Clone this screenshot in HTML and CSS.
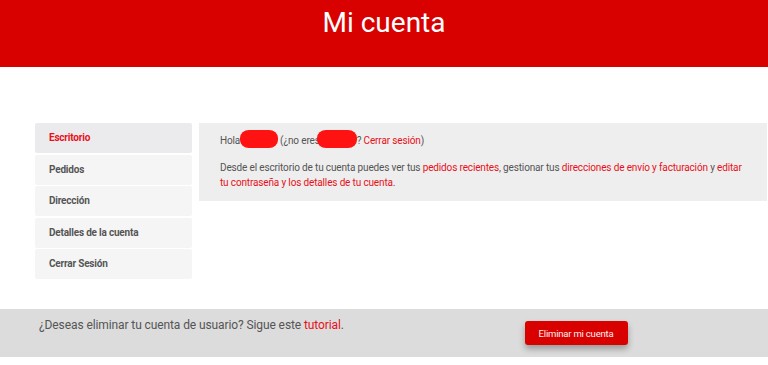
FILE: index.html
```html
<!DOCTYPE html>
<html lang="es">
<head>
<meta charset="utf-8">
<title>Mi cuenta</title>
<link rel="stylesheet" href="styles.css">
</head>
<body>
<header class="hero"><h1 class="hero-title">Mi cuenta</h1></header>
<main class="account">
  <nav class="account-nav">
    <a class="nav-item is-active" href="#">Escritorio</a>
    <a class="nav-item" href="#">Pedidos</a>
    <a class="nav-item" href="#">Dirección</a>
    <a class="nav-item" href="#">Detalles de la cuenta</a>
    <a class="nav-item" href="#">Cerrar Sesión</a>
  </nav>
  <section class="account-content">
    <p class="greet">Hola<span class="blob blob-a"></span>(¿no eres<span class="blob blob-b"></span>? <a class="link" href="#">Cerrar sesión</a>)</p>
    <p class="intro">Desde el escritorio de tu cuenta puedes ver tus <a class="link" href="#">pedidos recientes</a>, gestionar tus <a class="link" href="#">direcciones de envío y facturación</a> y <a class="link" href="#">editar tu contraseña y los detalles de tu cuenta</a>.</p>
  </section>
</main>
<footer class="delete-band">
  <div class="delete-text">¿Deseas eliminar tu cuenta de usuario? Sigue este <a class="link" href="#">tutorial</a>.</div>
  <div class="delete-action"><button class="btn-delete" type="button">Eliminar mi cuenta</button></div>
</footer>
</body>
</html>
```
FILE: styles.css
```css
* { box-sizing: border-box; }
body {
  margin: 0;
  font-family: Roboto, "Liberation Sans", sans-serif;
  color: #555;
  background: #fff;
}
.hero {
  height: 67px;
  background: #d90000;
  display: flex;
  justify-content: center;
  padding-top: 6px;
}
.hero-title {
  margin: 0;
  font-weight: 400;
  font-size: 28px;
  line-height: 34px;
  color: #fff;
}
.account {
  display: flex;
  gap: 7px;
  padding: 56px 1px 0 35px;
  align-items: flex-start;
}
.account-nav {
  flex: 0 0 157px;
  display: flex;
  flex-direction: column;
  gap: 1.5px;
}
.nav-item {
  display: block;
  height: 30px;
  line-height: 30px;
  padding-left: 14px;
  background: #f5f5f5;
  border-radius: 2px;
  font-size: 10px;
  letter-spacing: -0.2px;
  font-weight: 700;
  color: #555;
  text-decoration: none;
}
.nav-item.is-active {
  background: #ebebed;
  color: #e8101a;
}
.account-content {
  flex: 1;
  background: #eeeeee;
  padding: 11px 24px 11px 21px;
  min-height: 77px;
  font-size: 10px;
  letter-spacing: -0.15px;
  line-height: 14.5px;
}
.greet {
  margin: 0 0 13px;
  line-height: 14px;
}
.intro { margin: 0; }
.link { color: #e8101a; text-decoration: none; }
.blob {
  display: inline-block;
  vertical-align: middle;
  height: 18px;
  background: #ff1212;
  border-radius: 9px / 8px;
  margin-top: -4px;
}
.blob-a { width: 38px; margin-right: 2px; }
.blob-b { width: 40px; margin-left: -3px; }
.delete-band {
  margin-top: 30px;
  height: 48px;
  background: #dcdcdc;
  display: grid;
  grid-template-columns: 1fr 1fr;
}
.delete-text {
  padding: 8px 0 0 39px;
  font-size: 12px;
  letter-spacing: -0.1px;
  line-height: 16px;
  color: #555;
}
.delete-action {
  display: flex;
  justify-content: center;
  padding-top: 12px;
}
.btn-delete {
  width: 103px;
  height: 24px;
  border: 0;
  border-radius: 3px;
  background: #d90000;
  color: #fff0f0;
  font-family: Roboto, "Liberation Sans", sans-serif;
  font-size: 9.5px;
  letter-spacing: -0.2px;
  box-shadow: 0 4px 6px rgba(0, 0, 0, 0.3);
  padding: 0;
}
```
